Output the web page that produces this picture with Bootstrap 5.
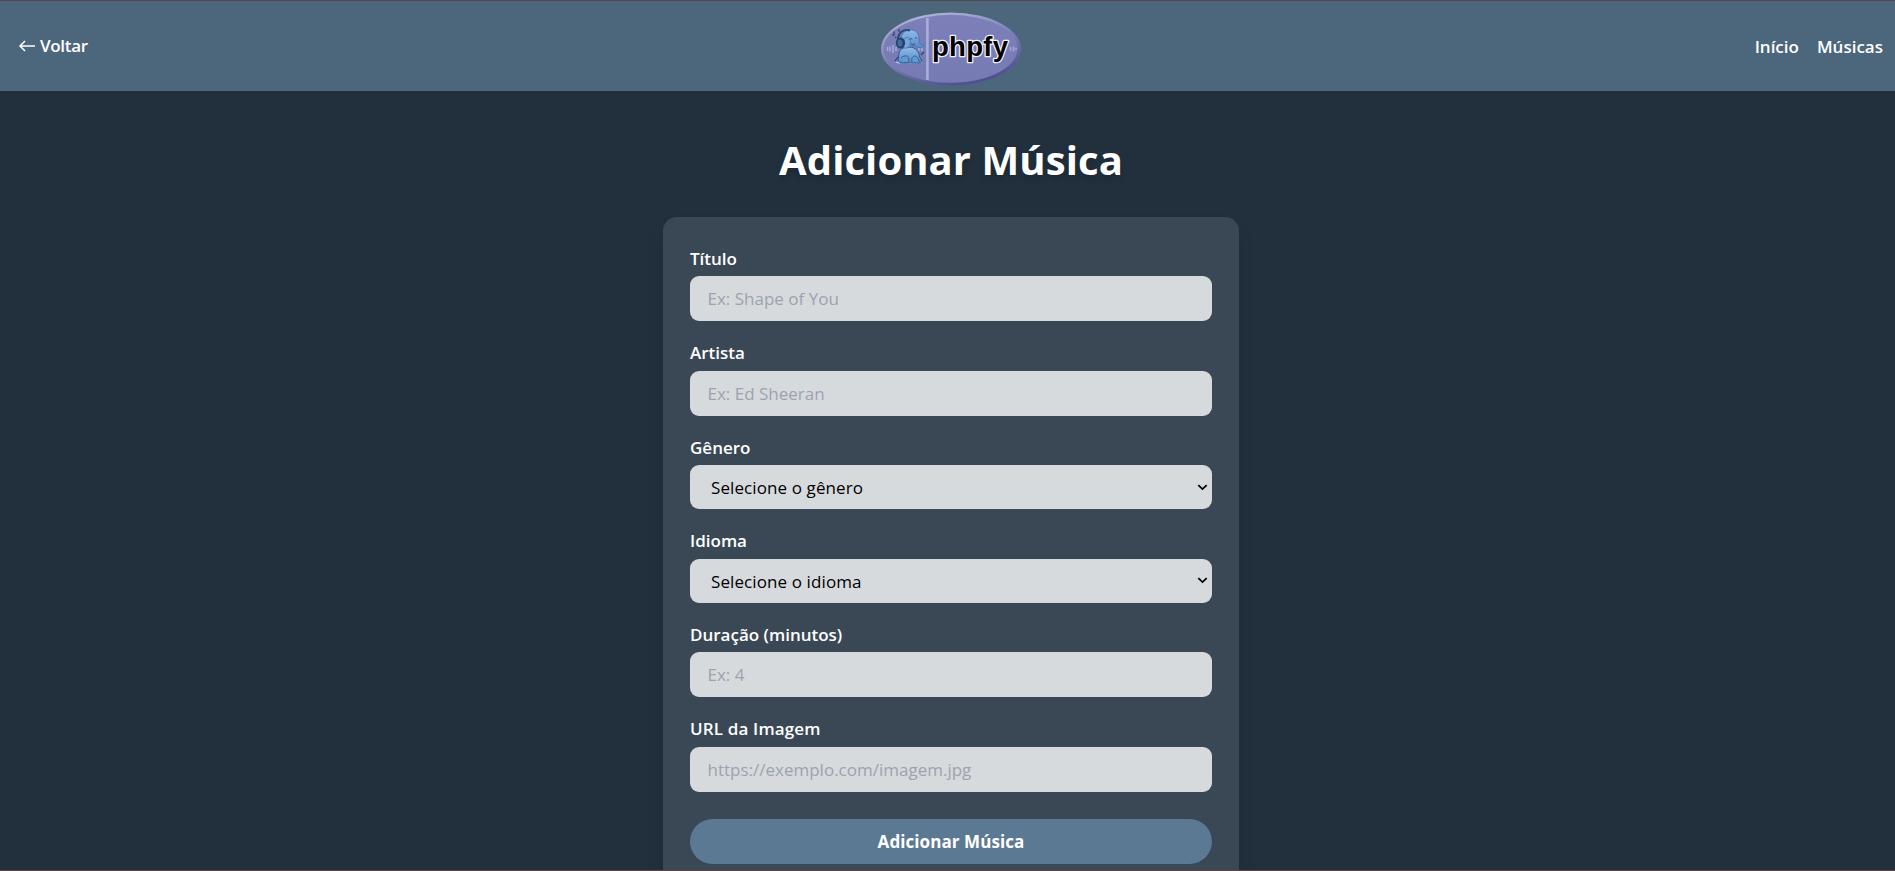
<!DOCTYPE html>
<html lang="pt-BR">
<head>
<meta charset="utf-8">
<meta name="viewport" content="width=device-width, initial-scale=1">
<title>phpfy - Adicionar Música</title>
<link href="https://cdn.jsdelivr.net/npm/bootstrap@5.3.0/dist/css/bootstrap.min.css" rel="stylesheet">
<style>
  html, body { height: 100%; overflow: hidden; }
  body {
    background: #22303e;
    color: #fff;
    font-family: "Open Sans", "Noto Sans", sans-serif;
    font-size: 17px;
    line-height: 27px;
    border-top: 1px solid #54484d;
  }
  .edge-line { height: 1px; background: #54484d; }
  .site-header { height: 90px; background: #4c667b; padding: 0 12px 0 18px; }
  .site-header a { color: #fff; font-weight: 600; text-decoration: none; }
  .back-link { letter-spacing: -.3px; gap: 4px; }
  .menu-links { gap: 18px; }
  .logo-link { padding-top: 5px; }
  .page-main { height: calc(100% - 90px); overflow: hidden; padding: 46px 0 0 7px; }
  .page-title {
    font-size: 40px; font-weight: 700; line-height: 45px; margin-bottom: 35px; letter-spacing: .08px;
    text-shadow: 0 4px 6px rgba(0,0,0,.2);
  }
  .song-form {
    width: 576px; padding: 27.5px 27px 0; border-radius: 14px 14px 0 0;
    background: #3a4754; box-shadow: 0 10px 16px rgba(0,0,0,.12);
  }
  .song-form .form-label { font-weight: 600; margin-bottom: 4.5px; line-height: 27px; }
  .song-form .url-label { letter-spacing: .15px; }
  .field-group { margin-bottom: 18px; }
  .song-form .form-control, .song-form .form-select {
    height: 45px; padding: 9px 17.5px; border: 0; border-radius: 9px;
    background-color: #d6dadd; color: #000; font-size: 17px; line-height: 27px;
  }
  .song-form .form-select {
    height: 44px; padding: 9px 21px 8px; letter-spacing: .1px;
    background-image: url("data:image/svg+xml,%3csvg xmlns='http://www.w3.org/2000/svg' viewBox='0 0 12 8'%3e%3cpath fill='none' stroke='%23000' stroke-width='2' d='M1.2 1.2 6 5.8l4.8-4.6'/%3e%3c/svg%3e");
    background-size: 11px 7px; background-position: right 4px center;
  }
  .song-form .form-control::placeholder { color: #9ca3af; opacity: 1; }
  .send-btn, .send-btn:hover {
    height: 45px; margin-top: 27px; padding: 0; border: 0; background: #5c7993; color: #fff;
    font-size: 17px; font-weight: 700; line-height: 45px; letter-spacing: .08px;
  }
</style>
</head>
<body>
<header class="site-header row g-0 align-items-center">
  <div class="col">
    <a href="#" class="back-link d-inline-flex align-items-center">
      <svg width="18" height="14" viewBox="0 0 18 14" fill="none" stroke="#fff" stroke-width="1.5"><path d="M17 7H2M7 2 2 7l5 5"/></svg>
      <span>Voltar</span>
    </a>
  </div>
  <a href="#" class="logo-link col-auto d-flex">
    <svg width="140" height="74" viewBox="0 0 140 74" role="img" aria-label="phpfy">
      <defs>
        <linearGradient id="rim" x1=".25" y1="0" x2=".7" y2="1"><stop offset="0" stop-color="#b3b7dc"/><stop offset=".4" stop-color="#8589be"/><stop offset="1" stop-color="#494a8e"/></linearGradient>
        <linearGradient id="fill" x1="0" y1="0" x2="0" y2="1"><stop offset="0" stop-color="#7d80b8"/><stop offset="1" stop-color="#777bb3"/></linearGradient>
        <linearGradient id="skin" x1="0" y1="0" x2="0" y2="1"><stop offset="0" stop-color="#91bdea"/><stop offset="1" stop-color="#5588c6"/></linearGradient>
      </defs>
      <ellipse cx="70" cy="37" rx="70" ry="36.5" fill="url(#rim)"/>
      <ellipse cx="69.5" cy="36.8" rx="67" ry="34" fill="url(#fill)"/>
      <path d="M46.4 6v62" stroke="#aaaedb" stroke-width="2.6"/>
      <path d="M6.500 35v4M9 34.500v5M12 33v8M15 35v4M38 34v5M41 35v4M129.500 35v4M132.500 34.500v5M135 36v2" stroke="#a5a9da" stroke-width="1.500"/>
      <ellipse cx="28" cy="50.500" rx="13.500" ry="1.500" fill="#a9c8ea"/>
      <path d="M17.500 45c0-8 5-10 11-10s10 5 10 10l2 3c1 3-2 3.500-5 3H20c-3-1-3-3-2.500-6z" fill="url(#skin)" stroke="#315786"/>
      <path d="M20 46c3-3 8-3 8 1s-2 4-5 3.500M31 50c-1-4 1-6 3-6s4 3 4 6" fill="#619ad8" stroke="#315786" stroke-width=".9"/>
      <path d="M20 26c1-6 6-9 11-8 5 .8 7 4 7 9 0 4 1 6 4 5.500 1.500 0 1.500 2 0 2.500-4 1.500-7-.5-8-2-4 4-14 3-14-3z" fill="url(#skin)" stroke="#4271a8" stroke-width=".8"/>
      <path d="M26 25c4 1 5 8 0 11-4 1-6-3-5-7z" fill="#75a6dc" stroke="#4271a8" stroke-width=".7"/>
      <path d="M28.500 27.500c1-1.300 2-1.300 2.500 0M34 26.500c.8-1 1.500-1 2 0M30 32c1.500 1 3 .800 4-.500" stroke="#26496f" stroke-width=".9" fill="none"/>
      <path d="M17 28c0-8 6-11.500 12-9.500" stroke="#284b78" stroke-width="2" fill="none"/>
      <ellipse cx="19.500" cy="31" rx="4.600" ry="5.600" fill="#263f6c"/>
      <ellipse cx="19" cy="31" rx="2.500" ry="3.500" fill="#416da5"/>
      <path d="M13 22.500v-3M18 20v-3M15.500 26l-1.500-1M17 45l-3 4M40 43l3-3" stroke="#2b4270" stroke-width="1.200"/>
      <circle cx="12.500" cy="23" r="1" fill="#2b4270"/>
      <text x="51" y="43.500" font-family="Liberation Sans, Arial, sans-serif" font-size="27.500" font-weight="700" textLength="76" fill="#000" stroke="#f0f0f8" stroke-width="2.600" stroke-linejoin="round" paint-order="stroke">phpfy</text>
    </svg>
  </a>
  <nav class="menu-links col d-flex justify-content-end">
    <a href="#">Início</a>
    <a href="#">Músicas</a>
  </nav>
</header>

<main class="page-main d-flex flex-column align-items-center">
  <h1 class="page-title">Adicionar Música</h1>
  <form class="song-form flex-fill">
    <div class="field-group">
      <label class="form-label d-block" for="titulo">Título</label>
      <input id="titulo" class="form-control" placeholder="Ex: Shape of You">
    </div>
    <div class="field-group">
      <label class="form-label d-block" for="artista">Artista</label>
      <input id="artista" class="form-control" placeholder="Ex: Ed Sheeran">
    </div>
    <div class="field-group">
      <label class="form-label d-block" for="genero">Gênero</label>
      <select id="genero" class="form-select"><option>Selecione o gênero</option></select>
    </div>
    <div class="field-group">
      <label class="form-label d-block" for="idioma">Idioma</label>
      <select id="idioma" class="form-select"><option>Selecione o idioma</option></select>
    </div>
    <div class="field-group">
      <label class="form-label d-block" for="duracao">Duração (minutos)</label>
      <input id="duracao" class="form-control" placeholder="Ex: 4">
    </div>
    <div>
      <label class="form-label url-label d-block" for="url">URL da Imagem</label>
      <input id="url" class="form-control" placeholder="https://exemplo.com/imagem.jpg">
    </div>
    <button type="button" class="send-btn btn rounded-pill w-100">Adicionar Música</button>
  </form>
</main>
<div class="edge-line fixed-bottom"></div>
<script src="https://cdn.jsdelivr.net/npm/bootstrap@5.3.0/dist/js/bootstrap.bundle.min.js"></script>
</body>
</html>
